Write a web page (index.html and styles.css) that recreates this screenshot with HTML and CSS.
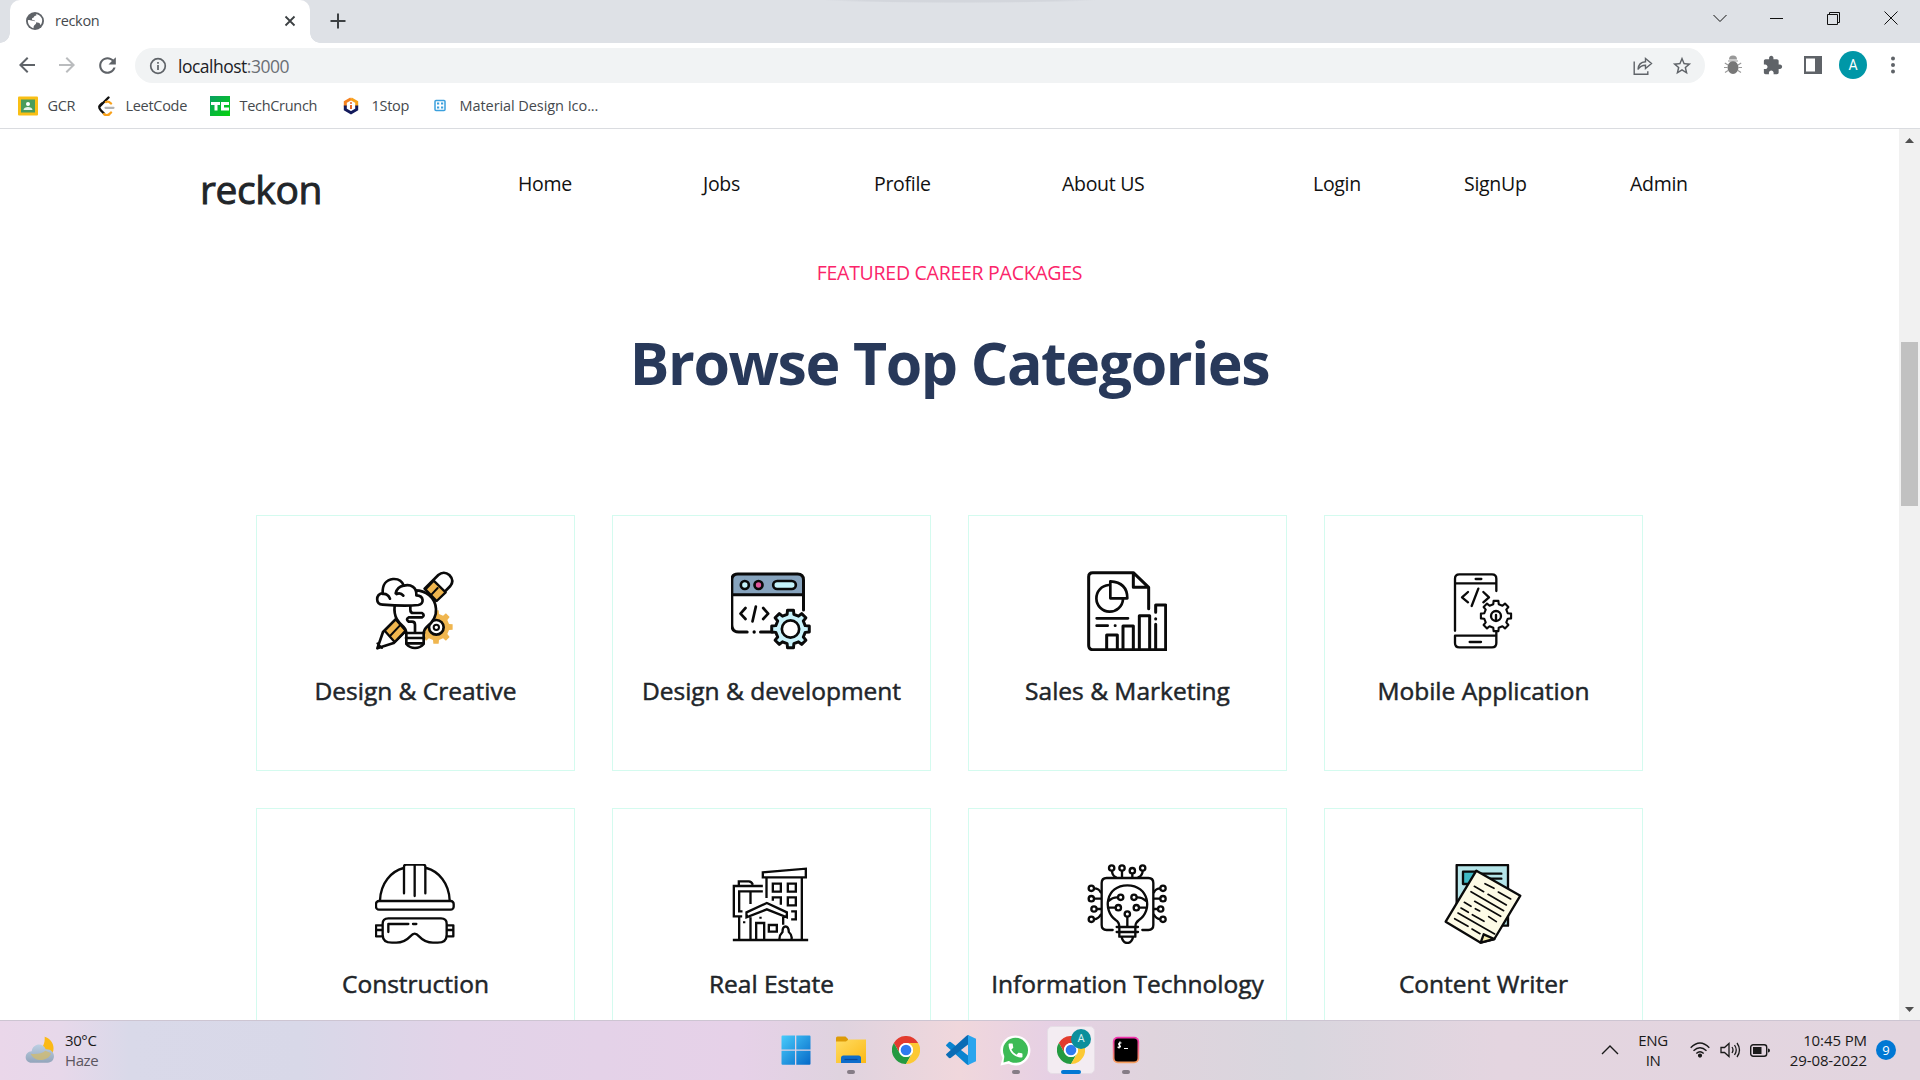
FILE: index.html
```html
<!DOCTYPE html>
<html lang="en">
<head>
<meta charset="utf-8">
<title>reckon</title>
<link rel="stylesheet" href="styles.css">
</head>
<body>
<svg class="defs" width="0" height="0">
  <symbol id="gear" viewBox="-62 -62 124 124" overflow="visible"><path d="M44.8-10.3 57.3-9.1 57.3 9.1 44.8 10.3 39 24.4 47 34.1 34.1 47 24.4 39 10.3 44.8 9.1 57.3-9.1 57.3-10.3 44.8-24.4 39-34.1 47-47 34.1-39 24.4-44.8 10.3-57.3 9.1-57.3-9.1-44.8-10.3-39-24.4-47-34.1-34.1-47-24.4-39-10.3-44.8-9.1-57.3 9.1-57.3 10.3-44.8 24.4-39 34.1-47 47-34.1 39-24.4z"/></symbol>
  <symbol id="chrome" viewBox="-42 -42 84 84">
    <circle r="30" fill="#fff"/>
    <path fill="#e33b2e" d="M-36.4-21A42 42 0 0 1 36.4-21H0A21 21 0 0 0-18.2 10.5Z"/>
    <path fill="#249a41" transform="rotate(-120)" d="M-36.4-21A42 42 0 0 1 36.4-21H0A21 21 0 0 0-18.2 10.5Z"/>
    <path fill="#fcc934" transform="rotate(120)" d="M-36.4-21A42 42 0 0 1 36.4-21H0A21 21 0 0 0-18.2 10.5Z"/>
    <circle r="21" fill="#fff"/><circle r="16" fill="#2f7bf0"/>
  </symbol>
</svg>

<div class="tabstrip">
  <div class="tab">
    <svg class="globe" width="18" height="18" viewBox="0 0 24 24"><circle cx="12" cy="12" r="12" fill="#5f6368"/><path fill="#fff" d="M2.500 11c3-1 5 1 8 1 3 .3 4 2 2.500 4-1.500 1.500-3 2-3 5.500C5.500 20.500 2.300 16 2.500 11zM13 2.600c3.500 0 7 3 8.300 6.400.7 3 0 6-1.800 8.500-1-2.500-2-3.500-4.500-3.500-2 0-2.500-3-5-3-2 0-3-3-.5-3.500 2-.3 1-2.500 3-2.500s1.500-1.400.5-2.400z"/></svg>
    <span class="tab-title">reckon</span>
    <svg class="tab-close" width="12" height="12" viewBox="0 0 12 12"><path d="M1.500 1.500l9 9m0-9l-9 9" stroke="#3c4043" stroke-width="1.800"/></svg>
  </div>
  <svg class="tab-add" width="16" height="16" viewBox="0 0 16 16"><path d="M8 .5v15M.5 8h15" stroke="#3c4043" stroke-width="2"/></svg>
  <div class="window-buttons">
    <svg width="14" height="14" viewBox="0 0 14 14"><path d="M.5 4L7 10.500 13.500 4"/></svg>
    <svg width="14" height="14" viewBox="0 0 14 14"><path d="M0 7.500h13"/></svg>
    <svg width="14" height="14" viewBox="0 0 14 14"><path d="M.5 3.500h10V13.500H.5zM2.500 3.500V1.500h10v10h-2"/></svg>
    <svg width="14" height="14" viewBox="0 0 14 14"><path d="M.5.5l13 13m0-13l-13 13"/></svg>
  </div>
</div>

<div class="toolbar">
  <div class="slots">
    <svg width="24" height="24" viewBox="0 0 24 24" fill="#5f6368"><path d="M20 11H7.830l5.590-5.590L12 4l-8 8 8 8 1.410-1.410L7.830 13H20z"/></svg>
    <svg width="24" height="24" viewBox="0 0 24 24" fill="#babcbe"><path d="M4 13h12.170l-5.590 5.590L12 20l8-8-8-8-1.410 1.410L16.170 11H4z"/></svg>
    <svg width="25" height="25" viewBox="0 0 24 24" fill="#5f6368"><path d="M17.650 6.350C16.200 4.900 14.210 4 12 4c-4.420 0-7.990 3.580-7.990 8s3.570 8 7.990 8c3.730 0 6.840-2.550 7.730-6h-2.080c-.82 2.330-3.040 4-5.650 4-3.310 0-6-2.690-6-6s2.690-6 6-6c1.660 0 3.140.69 4.220 1.780L13 11h7V4z"/></svg>
  </div>
  <div class="omnibox">
    <svg width="18" height="18" viewBox="0 0 18 18"><circle cx="9" cy="9" r="7.300" fill="none" stroke="#5f6368" stroke-width="1.700"/><path d="M9 8v5M9 5v1.700" stroke="#5f6368" stroke-width="1.700"/></svg>
    <span class="url">localhost<span class="port">:3000</span></span>
    <svg class="share" width="20" height="20" viewBox="0 0 20 20" fill="none" stroke="#5f6368" stroke-width="1.400"><path d="M1.200 5.500v12.800h13.600v-3M5 13.500c.3-5 3-7.500 7.500-7.700V2.500l6 5-6 5V9.300c-4 0-6 1.500-7.500 4.200z"/></svg>
    <svg width="22" height="22" viewBox="0 0 24 24" fill="#5f6368"><path d="M22 9.240l-7.190-.62L12 2 9.190 8.630 2 9.240l5.460 4.730L5.820 21 12 17.270 18.180 21l-1.630-7.030zM12 15.400l-3.760 2.270 1-4.280-3.320-2.880 4.380-.38L12 6.100l1.710 4.040 4.380.38-3.320 2.880 1 4.280z"/></svg>
  </div>
  <div class="slots">
    <svg width="18" height="20" viewBox="0 0 18 20"><path d="M5 4.500a4 4 0 0 1 8 0z" fill="#999"/><ellipse cx="9" cy="12.500" rx="5.500" ry="6.500" fill="#777"/><path d="M4 6h10M4 10L.8 8M3.500 12.500H0M4 15.500l-3 2M14 10l3.200-2M14.500 12.500H18M14 15.500l3 2" stroke="#999" stroke-width="1.100"/></svg>
    <svg width="20" height="20" viewBox="1 0 23 23" fill="#5f6368"><path d="M20.500 11H19V7c0-1.100-.9-2-2-2h-4V3.500C13 2.120 11.880 1 10.500 1S8 2.120 8 3.500V5H4c-1.100 0-1.990.9-1.990 2v3.800H3.500c1.490 0 2.700 1.210 2.700 2.700s-1.210 2.700-2.700 2.700H2V20c0 1.100.9 2 2 2h3.800v-1.500c0-1.490 1.210-2.700 2.700-2.700s2.700 1.210 2.700 2.700V22H17c1.100 0 2-.9 2-2v-4h1.500c1.380 0 2.500-1.120 2.500-2.500S21.880 11 20.500 11z"/></svg>
    <svg width="18" height="18" viewBox="0 0 18 18"><path fill="#5f6368" fill-rule="evenodd" d="M0 0h18v18H0zM2 2.500v13h9v-13z"/></svg>
    <div class="avatar">A</div>
    <svg width="4" height="18" viewBox="0 0 4 18" fill="#5f6368"><circle cx="2" cy="2.500" r="2"/><circle cx="2" cy="9" r="2"/><circle cx="2" cy="15.500" r="2"/></svg>
  </div>
</div>

<div class="bookmarks">
  <div class="bookmark"><svg width="20" height="20" viewBox="0 0 20 20"><rect y=".5" width="20" height="19" rx="1" fill="#f9bf15"/><rect x="3" y="3.500" width="14" height="13" fill="#4a9c5c"/><circle cx="10" cy="8" r="2" fill="#fff"/><path d="M5.500 14c0-4 9-4 9 0z" fill="#e6f3e9"/></svg><span>GCR</span></div>
  <div class="bookmark leet"><svg width="20" height="20" viewBox="0 0 20 20" fill="none" stroke-linecap="round"><path d="M12.500 1.500L4 10" stroke="#111" stroke-width="2.400"/><path d="M6 7.500c-3.500 3-3.500 4-1 7l3 3" stroke="#111" stroke-width="2.400"/><path d="M8 18c1.500 1.400 4 1.400 5.500 0l1.500-1.500M10 6c2-1 3.500 0 5 1.500" stroke="#f8a11b" stroke-width="2.400"/><path d="M9.500 11.800h8" stroke="#b3b3b3" stroke-width="2.200"/></svg><span>LeetCode</span></div>
  <div class="bookmark tech"><svg width="20" height="20" viewBox="0 0 20 20"><defs><linearGradient id="tc" x1="0" y1="0" x2="1" y2="1"><stop stop-color="#0a9e64"/><stop offset="1" stop-color="#05d30c"/></linearGradient></defs><rect width="20" height="20" fill="url(#tc)"/><path fill="#fff" d="M1 6h9v3H7.500v5.500h-3V9H1zM11 6h8v3h-5v2.500h5v3h-8z"/></svg><span>TechCrunch</span></div>
  <div class="bookmark stop"><svg width="20" height="20" viewBox="0 0 20 20"><path d="M9 2.700L3.300 6v4.500" fill="none" stroke="#f5821f" stroke-width="3"/><path d="M9 2.700L14.700 6v4.500" fill="none" stroke="#f9a11b" stroke-width="3"/><path d="M3.300 9.500v4L9 16.800l5.700-3.300v-4" fill="none" stroke="#131a5c" stroke-width="3"/><path d="M9 9v4M9 6.200v1.600" stroke="#e5662a" stroke-width="2"/></svg><span>1Stop</span></div>
  <div class="bookmark mdi"><svg width="20" height="20" viewBox="0 0 20 20"><rect x="5" y="4.500" width="10" height="10" rx="1" fill="#fff" stroke="#3ba0dd" stroke-width="1.500"/><path d="M7 7.500h2.200M11 7.500h2.200M7 11.500h2.200M11 11.500h2.200" stroke="#3ba0dd" stroke-width="2"/></svg><span>Material Design Ico...</span></div>
</div>

<div class="viewport">
  <main class="page">
    <header class="site-header">
      <h1 class="brand">reckon</h1>
      <a>Home</a><a>Jobs</a><a>Profile</a><a>About US</a><a>Login</a><a>SignUp</a><a>Admin</a>
    </header>
    <p class="eyebrow">FEATURED CAREER PACKAGES</p>
    <h2 class="headline">Browse Top Categories</h2>
    <section class="cards">
      <article class="card">
        <svg class="art" viewBox="45 33 240 240">
          <g fill="#f0b64f" stroke="none"><use href="#gear" x="174" y="147" width="108" height="108"/></g>
          <circle cx="229" cy="202" r="22" fill="#fff" stroke-width="8"/><circle cx="229" cy="202" r="8" stroke-width="6"/>
          <path fill="#fff" d="M194 86l41-41c10-9 23-9 33 0 11 11 11 23 3 33l-43 44z"/>
          <path fill="#f0b64f" stroke-width="7" d="M196 88l25-26 36 35-27 26z"/><path stroke-width="6" d="M212 106l21-22"/>
          <path fill="#fff" d="M107 178L69 216 52 265 101 249 136 214z"/>
          <path fill="#f0b64f" stroke-width="7" d="M107 178L74 212l30 34 33-34z"/><path stroke-width="6" d="M90 228l30-32M52 250l14 14"/>
          <path fill="#fff" d="M104 137c-4 35 12 52 28 65q7 7 7 20v30q10 12 26 12t26-12v-30q0-12 8-20c20-15 31-30 29-55-2-35-32-56-62-56z"/>
          <path d="M138 219h54M138 234h54M143 250h44M165 218v-24q0-9-9-9h-10q-10-8 0-13h40q10-6 0-13h-26q-9 0-9-10v-12"/>
          <path fill="#fff" d="M68 134c-22-2-22-30 0-35-1-24 10-40 31-42 16-1 28 7 32 20 22-6 40 6 38 29 24 1 24 26 6 29-35 4-70 2-107-1z"/>
          <path d="M68 102q15-2 22 14M131 77q-19 3-24 23M130 107q-8-10-20-5"/>
        </svg>
        <h3>Design &amp; Creative</h3>
      </article>
      <article class="card">
        <svg class="art" viewBox="64.500 33 240 240">
          <path fill="#fff" d="M67 104V60q0-18 18-18h179q18 0 18 18v118H207l-22 38H88q-21 0-21-21z" stroke="none"/>
          <path fill="#86a3bd" stroke="none" d="M67 104V60q0-18 18-18h179q18 0 18 18v44z"/>
          <path stroke-width="9" d="M113 216H88q-21 0-21-21V60q0-18 18-18h179q18 0 18 18v90M67 104h215M153 216h35"/>
          <circle cx="134" cy="216" r="5" fill="#000" stroke="none"/>
          <circle cx="106" cy="75" r="12" fill="#c5f3fa"/><circle cx="147" cy="75" r="12" fill="#e0569c"/><rect x="191" y="63" width="68" height="24" rx="12" fill="#c5f3fa"/>
          <path d="M108 144L93 161l15 16M161 144l15 17-15 16M139 140l-10 44"/>
          <g fill="#c9f3fb" stroke-width="9"><use href="#gear" x="182" y="146" width="122" height="122"/></g>
          <circle cx="243" cy="207" r="26" fill="#fff"/>
        </svg>
        <h3>Design &amp; development</h3>
      </article>
      <article class="card">
        <svg class="art" viewBox="53 33 240 240">
          <path stroke-width="9" d="M238 146V82L192 38H70q-12 0-12 12v206q0 13 12 13h221M192 38v44h46"/>
          <path d="M118 75a40 40 0 1 0 43 43M123 64v51h51q0-48-51-51zM82 175h94M82 197h33M137 197h1"/>
          <path stroke-width="9" d="M112 267v-42h32v42M161 267v-69h31v69M210 267V167h31v100M259 157v-22h30v132M259 176v1M259 193v74"/>
        </svg>
        <h3>Sales &amp; Marketing</h3>
      </article>
      <article class="card">
        <svg class="art thin" viewBox="72 33 240 240">
          <path d="M108 212V56q0-13 13-13h98q13 0 13 13v37M108 70h124M170 57h17M108 227h124v22q0 13-13 13h-98q-13 0-13-13zM232 227v-10M152 246h34"/>
          <path d="M147 96l-18 16 18 15M193 96l17 16-17 15M178 86l-20 52"/>
          <g fill="#fff" stroke-width="8"><use href="#gear" x="182" y="119" width="98" height="98"/></g>
          <circle cx="231" cy="168" r="15"/><path d="M231 165v17"/>
        </svg>
        <h3>Mobile Application</h3>
      </article>
      <article class="card">
        <svg class="art thin" viewBox="46 42 240 240">
          <path d="M61 151c2-52 33-87 71-97M270 151c-2-52-33-87-70-97M133 130V50q0-6 7-6h50q7 0 7 6v80M165 46v92"/>
          <rect x="49" y="153" width="233" height="26" rx="9"/>
          <path d="M69 221q0-16 17-16h158q17 0 17 16v33q0 24-27 24h-14c-39 0-40-27-55-27s-16 27-55 27H97q-28 0-28-24zM86 246v-24h60M160 222h10M69 226H49v33h20M261 226h20v33h-20M49 240h19M262 240h19"/>
        </svg>
        <h3>Construction</h3>
      </article>
      <article class="card">
        <svg class="art thin estate" viewBox="1114.500 42 240 240">
          <path d="M1120 270h226M1210 82V67l129-11v26zM1221 84v60M1327 84v184M1240 101h24v24h-24zM1285 101h24v24h-24zM1285 142h24v24h-24zM1240 152v-10h24v22M1295 184h14v24h-14"/>
          <path d="M1210 108h-87v91h25M1210 124h-71v60h10M1138 106V94h30q8 0 12 10M1173 124v38M1139 200v68M1161 187l61-28 60 28v15l-60-24-61 24zM1173 202v66M1271 198v26M1190 268v-49h24v49M1228 225h24v20h-24zM1203 200v6M1154 214v6M1260 268q-1-12 9-22c0-22 18-22 19 0q11 10 8 22"/>
        </svg>
        <h3>Real Estate</h3>
      </article>
      <article class="card">
        <svg class="art thin" viewBox="53 42 240 240">
          <path stroke-width="7" d="M130 240h-18q-15 0-15-15V99q0-15 15-15h125q15 0 15 15v126q0 15-15 15h-18"/>
          <path d="M150 230q0-13-11-20c-40-28-30-104 35-104s77 76 35 104q-11 8-11 20v30h-48zM142 231h64M142 246h64M157 262q4 17 17 17t17-17M174 230v-30M118 153q12-12 28-11M120 173h20M230 153q-12-12-28-11M228 173h-20"/>
          <path d="M128 62q0 14 12 20M158 62v20M189 70v12M220 62q0 14-13 20M74 115q15 0 20 12M74 146h20M82 177h12M74 208q14-2 20-14M274 115q-15 0-20 12M274 146h-20M266 177h-12M274 208q-14-2-20-14"/>
          <g fill="#fff"><circle cx="127" cy="54" r="8"/><circle cx="158" cy="54" r="8"/><circle cx="189" cy="62" r="8"/><circle cx="220" cy="54" r="8"/><circle cx="66" cy="115" r="8"/><circle cx="66" cy="146" r="8"/><circle cx="74" cy="177" r="8"/><circle cx="66" cy="208" r="8"/><circle cx="281" cy="115" r="8"/><circle cx="281" cy="146" r="8"/><circle cx="274" cy="177" r="8"/><circle cx="281" cy="208" r="8"/><circle cx="154" cy="142" r="8"/><circle cx="147" cy="173" r="8"/><circle cx="194" cy="142" r="8"/><circle cx="201" cy="173" r="8"/><circle cx="174" cy="192" r="8"/></g>
        </svg>
        <h3>Information Technology</h3>
      </article>
      <article class="card">
        <svg class="art thin" viewBox="1123 42 240 240">
          <path fill="#b5e5e9" d="M1164 45h154v182h-154z"/><path fill="#3fb9c4" d="M1183 65h42v37h-42z"/><path d="M1230 71h68M1245 86h53"/>
          <path fill="#fdfbe6" d="M1223 62l132 75-78 130-41 11-105-63z"/>
          <path fill="#f7edb0" d="M1277 267l-32-14-9 25z"/>
          <path stroke-width="5" d="M1249 101l27 14M1289 126l37 21M1217 109l28 16M1258 133l55 32M1207 125l98 57M1218 154l78 45M1187 157l20 12M1220 176l13 7M1177 174l22 13M1211 194l35 20M1260 200l23 15M1168 189l110 63M1158 206l40 23M1210 237l24 14"/>
        </svg>
        <h3>Content Writer</h3>
      </article>
    </section>
  </main>
  <div class="scrollbar">
    <svg width="9" height="5" viewBox="0 0 9 5"><path d="M0 5L4.500 0 9 5z" fill="#505050"/></svg>
    <div class="thumb"></div>
    <svg width="9" height="5" viewBox="0 0 9 5"><path d="M0 0L4.500 5 9 0z" fill="#505050"/></svg>
  </div>
</div>

<footer class="taskbar">
  <div class="weather">
    <svg width="30" height="28" viewBox="0 0 90 84"><defs><linearGradient id="cl" x1="0" y1="0" x2="0" y2="1"><stop stop-color="#bccfe3"/><stop offset="1" stop-color="#93a5bb"/></linearGradient></defs><path d="M59 2c2 25-10 46-42 50 10 28 54 26 66-2C91 30 80 8 59 2z" fill="#fbb917"/><path d="M20 80c-24 0-24-33 0-34 4-26 36-26 42-6 32-2 32 40 6 40z" fill="url(#cl)"/><path d="M17 53c18 3 34-1 44-9 8 3 15 5 17 9-8 22-48 28-61 0z" fill="#cfbc72" opacity=".8"/></svg>
    <div class="weather-text"><span>30°C</span><span class="muted">Haze</span></div>
  </div>
  <div class="apps">
    <div class="app"><svg width="30" height="30" viewBox="0 0 30 30"><defs><linearGradient id="win" x1="0" y1="0" x2="1" y2="1"><stop stop-color="#48cbfb"/><stop offset="1" stop-color="#0569c8"/></linearGradient></defs><path fill="url(#win)" d="M.5 1.500q0-1 1-1H14v14H.5zM15.300.5H28.500q1 0 1 1v13H15.300zM.5 15.800H14v14H1.500q-1 0-1-1zM15.300 15.800h14.200v13q0 1-1 1H15.300z"/></svg></div>
    <div class="app running"><svg width="32" height="28" viewBox="0 0 32 28"><defs><linearGradient id="fo" x1="0" y1="0" x2="1" y2="1"><stop stop-color="#ffdc63"/><stop offset="1" stop-color="#fbb914"/></linearGradient></defs><path d="M1 2q0-1.500 1.500-1.500h8L13 3v4H1z" fill="#dd9b08"/><path d="M1 5.500h10l2.500-2H31V27H1z" fill="url(#fo)"/><path d="M6 27v-5q0-2.500 2.500-2.500h15q2.500 0 2.500 2.500v5z" fill="#0d6dcb"/><path d="M9.500 23.500h13" stroke="#08499a" stroke-width="1.200"/></svg></div>
    <div class="app"><svg width="28" height="28"><use href="#chrome"/></svg></div>
    <div class="app"><svg width="30" height="30" viewBox="558 75 90 90"><path fill="#0a84d0" d="M559 104l8-8q2-1 5 0l54 42v27q-4 0-8-4l-59-53q-2-2 0-4z"/><path fill="#0b6cb5" d="M559 136l8 8q2 1 5 0l54-42V75q-4 0-8 4l-59 53q-2 2 0 4z"/><path fill="#2aa5ee" d="M624 75l24 11v68l-24 11z"/></svg></div>
    <div class="app running"><svg width="31" height="31" viewBox="0 0 31 31"><path fill="#fff" d="M15.500.5a15 15 0 1 1-7 28.300L.5 30.500 2.500 23A15 15 0 0 1 15.500.5z"/><circle cx="15.500" cy="15.300" r="12.500" fill="#3dbb56"/><path fill="#3dbb56" d="M4.500 20l-1 7.500 7-2z"/><path fill="#fff" transform="translate(6.300 6.300) scale(.77)" d="M6.620 10.790c1.440 2.830 3.760 5.140 6.590 6.590l2.200-2.200c.27-.27.67-.36 1.020-.24 1.120.37 2.330.57 3.570.57.55 0 1 .45 1 1V20c0 .55-.45 1-1 1C10.610 21 3 13.390 3 4c0-.55.45-1 1-1h3.500c.55 0 1 .45 1 1 0 1.250.2 2.450.57 3.570.11.35.03.74-.25 1.020z"/></svg></div>
    <div class="app active"><svg width="28" height="28"><use href="#chrome"/></svg><span class="badge">A</span></div>
    <div class="app running"><svg width="28" height="28" viewBox="0 0 28 28"><defs><linearGradient id="te" x1="0" y1="0" x2="0" y2="1"><stop stop-color="#f22fb0"/><stop offset="1" stop-color="#f5a05a"/></linearGradient></defs><rect x=".8" y=".8" width="26.400" height="26.400" rx="5" fill="url(#te)"/><rect x="2.500" y="2.500" width="23" height="23" rx="3.500" fill="#000"/><path d="M9.500 7c-3-.8-3.500 1.500-2 2.200s1.500 2.800-2 2M8 5.500L7 12.500M12 12.500h4" fill="none" stroke="#fff" stroke-width="1.200"/></svg></div>
  </div>
  <div class="tray">
    <svg width="18" height="10" viewBox="0 0 18 10"><path d="M1 9l8-8 8 8" fill="none" stroke="#1a1a1a" stroke-width="1.400"/></svg>
    <div class="lang"><span>ENG</span><span>IN</span></div>
    <svg class="wifi" width="20" height="16" viewBox="0 0 20 16" fill="none" stroke="#1a1a1a" stroke-width="1.400"><path d="M.7 5.800q9.300-9.500 18.600 0M3.500 8.800q6.500-6.300 13 0M6.300 11.600q3.700-3.500 7.400 0"/><circle cx="10" cy="13.600" r="1.400" fill="#1a1a1a"/></svg>
    <svg class="vol" width="21" height="18" viewBox="0 0 21 18" fill="none" stroke="#1a1a1a" stroke-width="1.300"><path d="M1 6.500h3.500L9 2.500v13L4.500 11.500H1zM12 6q2 3 0 6M14.500 4q3.500 5 0 10M17 2q5 7 0 14"/></svg>
    <svg class="batt" width="20" height="13" viewBox="0 0 20 13"><rect x=".7" y=".7" width="16" height="11.600" rx="2.500" fill="none" stroke="#1a1a1a" stroke-width="1.400"/><rect x="3" y="3" width="8.500" height="7" fill="#1a1a1a"/><path d="M18 4.500q2 0 2 2t-2 2z" fill="#1a1a1a"/></svg>
    <div class="clock"><span>10:45 PM</span><span>29-08-2022</span></div>
    <div class="count">9</div>
  </div>
</footer>
</body>
</html>
```

FILE: styles.css
```css
* { box-sizing: border-box; }
body {
  margin: 0;
  width: 1920px;
  height: 1080px;
  overflow: hidden;
  display: flex;
  flex-direction: column;
  background: #fff;
  color: #212529;
  font-family: "Open Sans", "Noto Sans", sans-serif;
  white-space: nowrap;
}
svg { display: block; flex: none; }
.defs { position: absolute; }
h1, h2, h3, p { margin: 0; }

/* browser chrome */
.tabstrip {
  height: 43px; flex: none; display: flex; align-items: center; padding-left: 10px;
  background: radial-gradient(ellipse 138px 3px at 960px 0, #d3d6dc 70%, transparent) #dee1e6;
}
.tab {
  width: 300px; height: 43px; padding: 0 14px 2px 16px;
  display: flex; align-items: center; gap: 11px;
  background: #fff; border-radius: 10px 10px 0 0; position: relative;
}
.tab::before, .tab::after { content: ""; position: absolute; bottom: 0; width: 10px; height: 10px; }
.tab::before { left: -10px; background: radial-gradient(circle at 0 0, transparent 9.5px, #fff 10px); }
.tab::after { right: -10px; background: radial-gradient(circle at 100% 0, transparent 9.5px, #fff 10px); }
.tab-title { font-size: 14.5px; color: #45494d; letter-spacing: -.3px; flex: 1; }
.tab-add { margin: 0 0 1px 20px; }
.window-buttons { margin-left: auto; padding: 0 1px 8px 0; display: flex; }
.window-buttons svg { margin: 0 21.5px; fill: none; stroke: #111; }

.toolbar { height: 44px; flex: none; display: flex; align-items: center; padding-left: 7px; }
.slots { display: grid; grid-auto-flow: column; grid-auto-columns: 40px; justify-items: center; align-items: center; }
.omnibox {
  width: 1570px; height: 35px; margin: 1px 8px 0; padding: 0 12px 0 14px;
  display: flex; align-items: center; background: #f1f3f4; border-radius: 18px;
}
.url { margin-left: 11px; flex: 1; font-size: 17.5px; letter-spacing: -.5px; color: #202124; }
.port { color: #6b6f74; }
.share { margin-right: 18px; }
.avatar { width: 28px; height: 28px; border-radius: 50%; background: #0097a7; color: #fff; font: 14px/28px Roboto, sans-serif; text-align: center; }

.bookmarks {
  height: 42px; flex: none; padding: 0 0 4px 18px; border-bottom: 1px solid #dadce0;
  display: grid; grid-template-columns: 78px 114px 132px 88px auto; align-items: center;
}
.bookmark { display: flex; align-items: center; gap: 10px; font-size: 14.5px; color: #45494d; letter-spacing: -.3px; }
.bookmark span { margin-left: -.5px; }
.mdi { letter-spacing: -.07px; }

/* page */
.viewport { flex: 1; min-height: 0; display: flex; }
.page { flex: 1; min-width: 0; height: 891px; overflow: hidden; }
.site-header {
  padding: 26px 0 0 200px; height: 121px;
  display: grid; grid-template-columns: 318px 185px 171px 188px 251px 151px 166px auto; align-items: start;
  font-size: 19.5px; color: #111; letter-spacing: -.3px;
}
.site-header a { line-height: 57px; }
.brand { font-size: 39px; font-weight: 500; line-height: 68px; letter-spacing: -.4px; color: #212529; -webkit-text-stroke: .9px currentColor; }
.eyebrow { text-align: center; font-size: 19.5px; line-height: 46px; letter-spacing: -.27px; color: #fb246a; }
.headline { margin-top: 25px; text-align: center; font-size: 59px; font-weight: 700; line-height: 82px; letter-spacing: -1.4px; color: #28395a; }
.cards {
  margin-top: 112px; padding: 0 256px;
  display: grid; grid-template-columns: repeat(4, 319px); column-gap: 37px; row-gap: 37px;
}
.card { height: 256px; padding-top: 55px; border: 1px solid #d4fbef; display: flex; flex-direction: column; align-items: center; }
.art { width: 80px; height: 80px; margin-right: 1px; fill: none; stroke: #0a0a0a; stroke-width: 8; stroke-linecap: round; stroke-linejoin: round; }
.thin { stroke-width: 7; }
.estate { stroke-linecap: butt; stroke-linejoin: miter; }
.card h3 { margin-top: 22px; font-size: 24.5px; font-weight: 500; line-height: 36px; letter-spacing: 0; -webkit-text-stroke: .5px currentColor; }

.scrollbar { width: 21px; background: #f1f1f1; display: flex; flex-direction: column; align-items: center; padding: 9px 0 8px; }
.thumb { width: 17px; height: 164px; margin: 199px 0 auto; background: #c1c1c1; }

/* taskbar */
.taskbar {
  height: 60px; flex: none; display: grid; grid-template-columns: 768px 385px 1fr; align-items: center;
  padding-bottom: 1px;
  border-top: 1px solid #cdc5d2; color: #1a1a1a; font-size: 15px; letter-spacing: -.4px;
  background: linear-gradient(90deg, #ead7ea 0, #e7d8ea 60px, #d9d9e9 130px, #d8d8e8 300px, #e2d3e8 460px, #e6d1e8 740px, #dfd3df 840px, #f0d7dc 960px, #e6d0e4 1050px, #dfd4dd 1150px, #d9d6de 1300px, #e4d5e0 1500px, #e2d5df 1920px);
}
.weather { display: flex; align-items: center; gap: 10px; padding-left: 25px; }
.weather-text, .lang, .clock { display: grid; line-height: 20px; }
.muted { color: #5b5660; }
.apps { display: grid; grid-template-columns: repeat(7, 55px); }
.app { height: 48px; display: grid; place-items: center; position: relative; }
.running::after, .active::after {
  content: ""; position: absolute; bottom: 0; left: 23.5px; width: 8px; height: 4px; border-radius: 2px; background: #857c86;
}
.active::before { content: ""; position: absolute; inset: 0 3.5px; background: #f3ecf2; border-radius: 5px; border: 1px solid #e6dde6; }
.active svg { position: relative; }
.active::after { left: 17.5px; width: 20px; background: #0078d4; }
.badge {
  position: absolute; left: 28px; top: 3px; width: 20px; height: 20px; border-radius: 50%;
  background: #0b8f9c; color: #d9f1f3; font: 11px/20px Roboto, sans-serif; text-align: center;
}
.tray { display: flex; align-items: center; padding-left: 448px; }
.lang { width: 32px; margin-left: 18px; text-align: center; }
.wifi { margin-left: 21px; }
.vol { margin-left: 10px; }
.batt { margin-left: 9px; }
.clock { width: 90px; margin-left: 7px; text-align: right; letter-spacing: -.1px; }
.count { margin-left: 9px; width: 20px; height: 20px; border-radius: 50%; background: #0078d4; color: #fff; font-size: 13px; line-height: 20px; text-align: center; letter-spacing: 0; }
```
